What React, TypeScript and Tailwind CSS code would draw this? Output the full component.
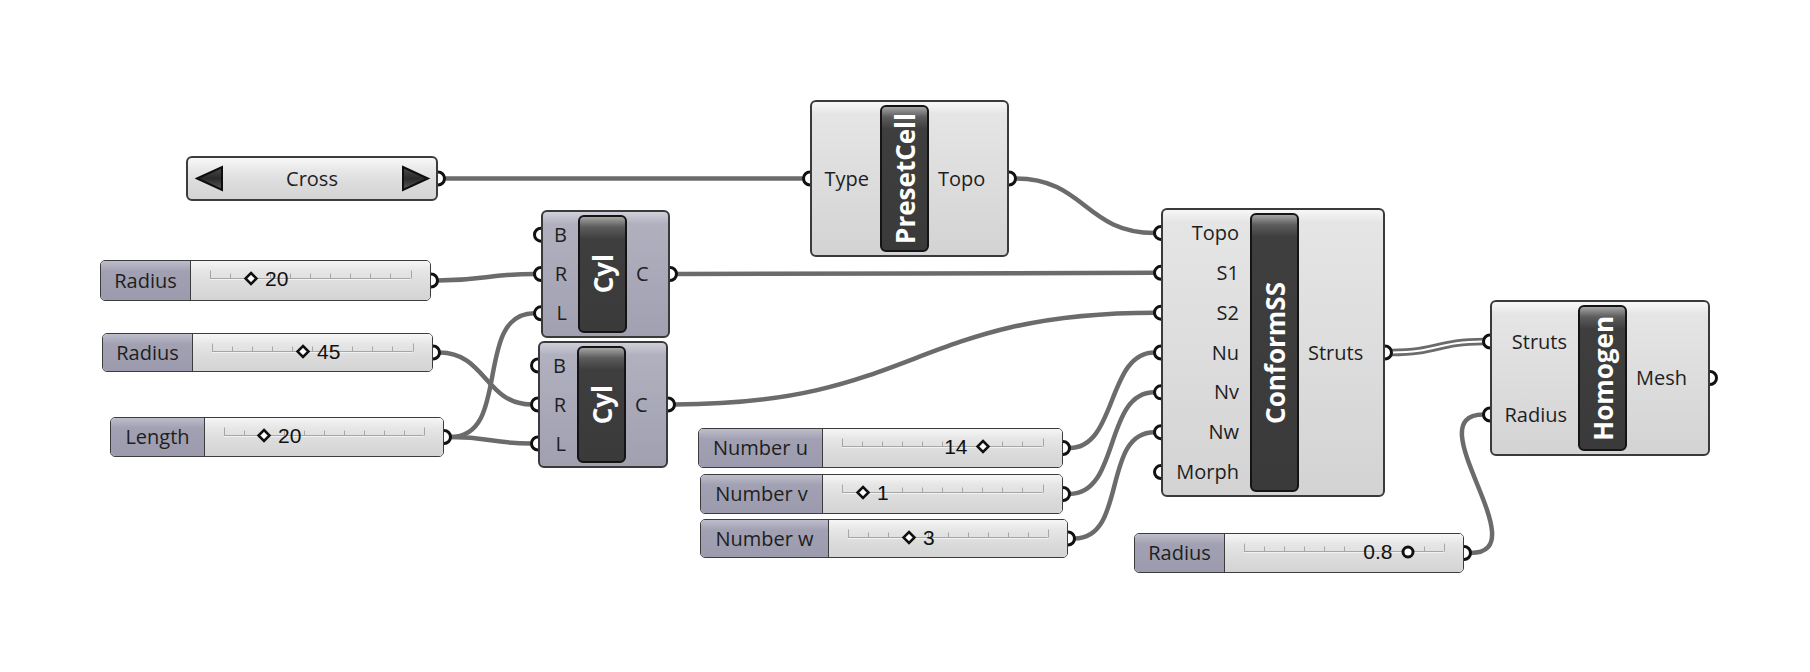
import React from 'react';

type NodeDef = {
  id: string;
  x: number;
  y: number;
  w: number;
  h: number;
  inW: number;
  inputs: string[];
  outputs: string[];
  title: string;
  purple?: boolean;
};

type SliderDef = {
  x: number;
  y: number;
  w: number;
  h: number;
  labelEnd: number;
  label: string;
  value: string;
  hx: number;
  side: 'r' | 'l';
  circle?: boolean;
};

const nodes: Record<string, NodeDef> = {
  preset: { id: 'preset', x: 810, y: 100, w: 199, h: 157, inW: 68, inputs: ['Type'], outputs: ['Topo'], title: 'PresetCell' },
  cyl1: { id: 'cyl1', x: 541, y: 210, w: 129, h: 128, inW: 35, inputs: ['B', 'R', 'L'], outputs: ['C'], title: 'Cyl', purple: true },
  cyl2: { id: 'cyl2', x: 538, y: 341, w: 130, h: 127, inW: 37, inputs: ['B', 'R', 'L'], outputs: ['C'], title: 'Cyl', purple: true },
  conform: {
    id: 'conform', x: 1161, y: 208, w: 224, h: 289, inW: 87,
    inputs: ['Topo', 'S1', 'S2', 'Nu', 'Nv', 'Nw', 'Morph'], outputs: ['Struts'], title: 'ConformSS',
  },
  homogen: { id: 'homogen', x: 1490, y: 300, w: 220, h: 156, inW: 86, inputs: ['Struts', 'Radius'], outputs: ['Mesh'], title: 'Homogen' },
};

const sliders: SliderDef[] = [
  { x: 100, y: 260, w: 331, h: 41, labelEnd: 190, label: 'Radius', value: '20', hx: 250, side: 'r' },
  { x: 102, y: 333, w: 331, h: 39, labelEnd: 192, label: 'Radius', value: '45', hx: 302, side: 'r' },
  { x: 110, y: 417, w: 334, h: 40, labelEnd: 204, label: 'Length', value: '20', hx: 263, side: 'r' },
  { x: 698, y: 428, w: 365, h: 40, labelEnd: 822, label: 'Number u', value: '14', hx: 982, side: 'l' },
  { x: 700, y: 474, w: 363, h: 40, labelEnd: 822, label: 'Number v', value: '1', hx: 862, side: 'r' },
  { x: 700, y: 519, w: 368, h: 39, labelEnd: 828, label: 'Number w', value: '3', hx: 908, side: 'r' },
  { x: 1134, y: 533, w: 330, h: 40, labelEnd: 1224, label: 'Radius', value: '0.8', hx: 1407, side: 'l', circle: true },
];

const CROSS = { x: 186, y: 156, w: 252, h: 45 };

type Pt = { x: number; y: number };

function inGrip(n: NodeDef, i: number): Pt {
  const rh = (n.h - 10) / n.inputs.length;
  return { x: n.x, y: n.y + 5 + rh * (i + 0.5) };
}
function outGrip(n: NodeDef, i: number): Pt {
  const rh = (n.h - 10) / n.outputs.length;
  return { x: n.x + n.w, y: n.y + 5 + rh * (i + 0.5) };
}
function sliderGrip(s: SliderDef): Pt {
  return { x: s.x + s.w, y: s.y + s.h / 2 };
}

const R = 6.5;

function wirePath(a: Pt, b: Pt) {
  const x1 = a.x + R;
  const x2 = b.x - R;
  const dx = x2 - x1;
  const dy = b.y - a.y;
  const off = 0.5 * Math.max(Math.abs(dx), Math.abs(dy));
  return `M${x1} ${a.y} C${x1 + off} ${a.y} ${x2 - off} ${b.y} ${x2} ${b.y}`;
}

const crossOut: Pt = { x: CROSS.x + CROSS.w, y: CROSS.y + CROSS.h / 2 };

const wires: { a: Pt; b: Pt; double?: boolean }[] = [
  { a: crossOut, b: inGrip(nodes.preset, 0) },
  { a: outGrip(nodes.preset, 0), b: inGrip(nodes.conform, 0) },
  { a: sliderGrip(sliders[0]), b: inGrip(nodes.cyl1, 1) },
  { a: sliderGrip(sliders[1]), b: inGrip(nodes.cyl2, 1) },
  { a: sliderGrip(sliders[2]), b: inGrip(nodes.cyl1, 2) },
  { a: sliderGrip(sliders[2]), b: inGrip(nodes.cyl2, 2) },
  { a: outGrip(nodes.cyl1, 0), b: inGrip(nodes.conform, 1) },
  { a: outGrip(nodes.cyl2, 0), b: inGrip(nodes.conform, 2) },
  { a: sliderGrip(sliders[3]), b: inGrip(nodes.conform, 3) },
  { a: sliderGrip(sliders[4]), b: inGrip(nodes.conform, 4) },
  { a: sliderGrip(sliders[5]), b: inGrip(nodes.conform, 5) },
  { a: outGrip(nodes.conform, 0), b: inGrip(nodes.homogen, 0), double: true },
  { a: sliderGrip(sliders[6]), b: inGrip(nodes.homogen, 1) },
];

const grips: { p: Pt; out: boolean }[] = [
  { p: crossOut, out: true },
  ...sliders.map((s) => ({ p: sliderGrip(s), out: true })),
  ...Object.values(nodes).flatMap((n) => [
    ...n.inputs.map((_, i) => ({ p: inGrip(n, i), out: false })),
    ...n.outputs.map((_, i) => ({ p: outGrip(n, i), out: true })),
  ]),
];

function Node({ n }: { n: NodeDef }) {
  return (
    <div
      className={`absolute flex rounded-[6px] border-2 border-[#3a3a3a] py-[3px] font-['Open_Sans',sans-serif] ${
        n.purple
          ? 'bg-[linear-gradient(to_bottom,#d0d0da_0px,#b0b0bf_12px,#a7a7b7_60%,#a0a0b1_100%)]'
          : 'bg-[linear-gradient(to_bottom,#f7f7f7_0px,#e5e5e5_12px,#dbdbdb_60%,#d3d3d3_100%)]'
      }`}
      style={{ left: n.x, top: n.y, width: n.w, height: n.h }}
    >
      <div className="flex shrink-0 flex-col" style={{ width: n.inW }}>
        {n.inputs.map((l) => (
          <div key={l} className="flex flex-1 items-center justify-end pr-[11px] text-[20px] leading-[20px] text-[#1e1e1e]">
            {l}
          </div>
        ))}
      </div>
      <div className="flex w-[49px] shrink-0 items-center justify-center rounded-[6px] border-2 border-[#141414] bg-[linear-gradient(to_bottom,#a4a4a4_0px,#5c5c5c_10px,#3e3e3e_22px,#3a3a3a_100%)]">
        <span className="rotate-180 text-[26px] font-bold leading-none text-white [writing-mode:vertical-rl]">{n.title}</span>
      </div>
      <div className="flex flex-1 flex-col pl-[9px]">
        {n.outputs.map((l) => (
          <div key={l} className="flex flex-1 items-center text-[20px] leading-[20px] text-[#1e1e1e]">
            {l}
          </div>
        ))}
      </div>
    </div>
  );
}

function Slider({ s }: { s: SliderDef }) {
  const labelW = s.labelEnd - s.x;
  const vw = s.x + s.w - s.labelEnd - 1.5;
  const ty = 17.5;
  const t0 = 19;
  const t1 = vw - 20;
  const hx = s.hx - s.labelEnd;
  const ticks = Array.from({ length: 11 }, (_, i) => t0 + (i * (t1 - t0)) / 10);
  return (
    <div
      className="absolute flex overflow-hidden rounded-[5px] border-[1.5px] border-[#3c3c3c]"
      style={{ left: s.x, top: s.y, width: s.w, height: s.h }}
    >
      <div
        className="flex shrink-0 items-center justify-center border-r-[1.5px] border-[#3c3c3c] bg-[linear-gradient(to_bottom,#bdbdcb_0px,#a1a1b3_10px,#9b9bad_100%)] font-['Open_Sans',sans-serif] text-[20px] leading-[20px] text-[#1e1e1e]"
        style={{ width: labelW }}
      >
        {s.label}
      </div>
      <div className="relative flex-1 bg-[linear-gradient(to_bottom,#f6f6f6_0px,#e6e6e6_10px,#dcdcdc_60%,#d4d4d4_100%)]">
        <svg className="absolute inset-0 h-full w-full" xmlns="http://www.w3.org/2000/svg">
          <line x1={t0} y1={ty} x2={t1} y2={ty} stroke="#a6a6a6" strokeWidth={1} />
          <line x1={t0} y1={ty + 1} x2={t1} y2={ty + 1} stroke="#f2f2f2" strokeWidth={1} />
          {ticks.map((x, i) => (
            <line
              key={i}
              x1={Math.round(x) + 0.5}
              y1={ty}
              x2={Math.round(x) + 0.5}
              y2={ty - (i === 0 || i === 10 ? 8 : 5)}
              stroke="#a6a6a6"
              strokeWidth={1}
            />
          ))}
          {s.circle ? (
            <circle cx={hx} cy={ty + 0.5} r={5} fill="white" stroke="#111" strokeWidth={3} />
          ) : (
            <polygon
              points={`${hx},${ty - 5.5} ${hx + 5.5},${ty} ${hx},${ty + 5.5} ${hx - 5.5},${ty}`}
              fill="white"
              stroke="#111"
              strokeWidth={2.5}
              strokeLinejoin="miter"
            />
          )}
        </svg>
        {s.side === 'r' ? (
          <span
            className="absolute font-['Liberation_Sans',Arial,sans-serif] text-[21px] leading-[20px] text-[#111]"
            style={{ left: hx + 14, top: ty - 10 }}
          >
            {s.value}
          </span>
        ) : (
          <span
            className="absolute font-['Liberation_Sans',Arial,sans-serif] text-[21px] leading-[20px] text-[#111]"
            style={{ right: vw - (hx - 15), top: ty - 10 }}
          >
            {s.value}
          </span>
        )}
      </div>
    </div>
  );
}

function ValueList() {
  return (
    <div className="absolute left-[186px] top-[156px] flex h-[45px] w-[252px] items-center justify-center rounded-[6px] border-2 border-[#3c3c3c] bg-[linear-gradient(to_bottom,#f8f8f8_0px,#e8e8e8_12px,#dcdcdc_60%,#d4d4d4_100%)] font-['Open_Sans',sans-serif] text-[20px] leading-[20px] text-[#1e1e1e]">
      <svg className="absolute inset-0 h-full w-full" xmlns="http://www.w3.org/2000/svg">
        <defs>
          <linearGradient id="arr" x1="0" y1="0" x2="0" y2="1">
            <stop offset="0" stopColor="#4a4a4a" />
            <stop offset="0.5" stopColor="#2a2a2a" />
            <stop offset="1" stopColor="#5a5a5a" />
          </linearGradient>
        </defs>
        <polygon points="9,20.5 34,9 34,32" fill="url(#arr)" stroke="#0e0e0e" strokeWidth={2} strokeLinejoin="miter" />
        <polygon points="215,9 240,20.5 215,32" fill="url(#arr)" stroke="#0e0e0e" strokeWidth={2} strokeLinejoin="miter" />
      </svg>
      <span className="relative">Cross</span>
    </div>
  );
}

export default function App() {
  return (
    <div className="relative h-[672px] w-[1810px] overflow-hidden bg-white">
      <svg className="absolute inset-0" width={1810} height={672} xmlns="http://www.w3.org/2000/svg">
        {wires.map((w, i) =>
          w.double ? (
            <g key={i}>
              <path d={wirePath(w.a, w.b)} fill="none" stroke="#6b6b6b" strokeWidth={7.5} />
              <path d={wirePath(w.a, w.b)} fill="none" stroke="#ffffff" strokeWidth={2} />
            </g>
          ) : (
            <path key={i} d={wirePath(w.a, w.b)} fill="none" stroke="#6b6b6b" strokeWidth={4.5} strokeLinecap="round" />
          )
        )}
      </svg>

      <ValueList />
      {sliders.map((s, i) => (
        <Slider key={i} s={s} />
      ))}
      {Object.values(nodes).map((n) => (
        <Node key={n.id} n={n} />
      ))}

      <svg className="pointer-events-none absolute inset-0" width={1810} height={672} xmlns="http://www.w3.org/2000/svg">
        {grips.map((g, i) => (
          <path
            key={i}
            d={`M${g.p.x} ${g.p.y - R} A${R} ${R} 0 0 ${g.out ? 1 : 0} ${g.p.x} ${g.p.y + R}`}
            fill="white"
            stroke="#111"
            strokeWidth={3}
          />
        ))}
      </svg>
    </div>
  );
}
